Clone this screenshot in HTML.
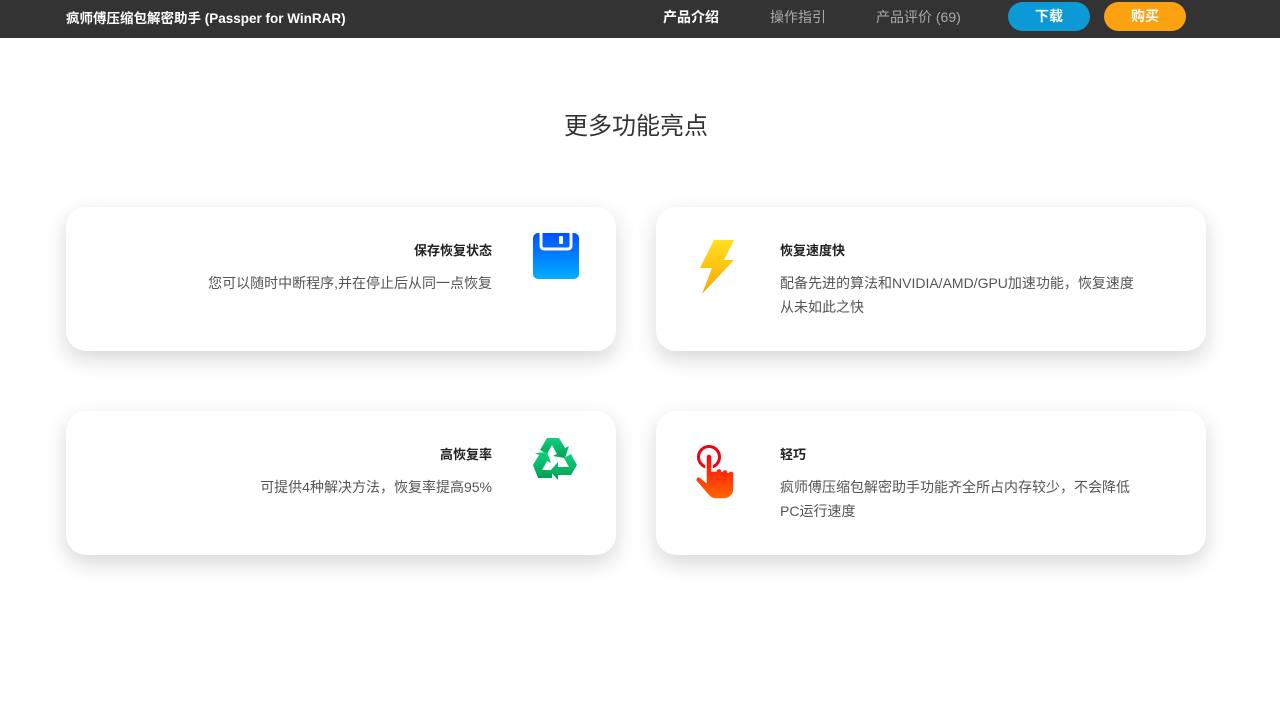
<!DOCTYPE html>
<html><head><meta charset="utf-8"><style>
*{margin:0;padding:0;box-sizing:border-box}
body{width:1280px;height:720px;background:#fff;font-family:"Liberation Sans","Noto Sans CJK SC",sans-serif;position:relative;overflow:hidden}
.nav{position:absolute;left:0;top:0;width:1280px;height:38px;background:#333}
.nav .t{position:absolute;left:66px;top:7px;color:#fff;font-size:13.5px;font-weight:bold}
.nav a{position:absolute;top:7px;font-size:14px;color:#aaa}
.btn{position:absolute;top:2px;width:82px;height:29px;border-radius:15px;color:#fff;font-size:14px;text-align:center;line-height:29px;font-weight:bold}
h2{position:absolute;top:106px;left:0;width:1272px;text-align:center;font-size:24px;font-weight:normal;color:#333}
.card{position:absolute;width:550px;height:144px;border-radius:20px;background:#fff;box-shadow:0 8px 22px rgba(0,0,0,.16)}
.card h4{position:absolute;font-size:13px;font-weight:bold;color:#222;top:33px}
.card p{position:absolute;font-size:14px;color:#555;line-height:24px;top:64px}
.r h4,.r p{right:124px;text-align:right}
.l h4,.l p{left:124px;width:364px}
.card svg{position:absolute}
</style></head><body>
<div class="nav">
<div class="t">疯师傅压缩包解密助手 (Passper for WinRAR)</div>
<a style="left:663px;color:#fff;font-weight:bold">产品介绍</a>
<a style="left:770px">操作指引</a>
<a style="left:876px">产品评价 (69)</a>
<div class="btn" style="left:1008px;background:#0c9ad6">下载</div>
<div class="btn" style="left:1104px;background:#fca10f">购买</div>
</div>
<h2>更多功能亮点</h2>

<div class="card r" style="left:66px;top:207px">
<svg style="left:466px;top:26px" width="48" height="48" viewBox="0 0 48 48"><defs><linearGradient id="b" x1="0" y1="0" x2="0" y2="1"><stop offset="0" stop-color="#0050ff"/><stop offset="1" stop-color="#00b0ff"/></linearGradient></defs><rect x="1" y="0" width="46" height="46" rx="5" fill="url(#b)"/><path d="M9 0v13a3 3 0 0 0 3 3h24a3 3 0 0 0 3-3V0" fill="none" stroke="#fff" stroke-width="3"/><rect x="27" y="3" width="4" height="8" rx="1" fill="#fff"/></svg>
<h4>保存恢复状态</h4><p>您可以随时中断程序,并在停止后从同一点恢复</p></div>

<div class="card l" style="left:656px;top:207px">
<svg style="left:44px;top:33px" width="36" height="54" viewBox="0 0 36 54"><defs><linearGradient id="y" x1="0" y1="0" x2="0" y2="1"><stop offset="0" stop-color="#ffe020"/><stop offset="1" stop-color="#f8a800"/></linearGradient></defs><path d="M14 0H34L24 20H34L2 54L12 28H0Z" fill="url(#y)"/></svg>
<h4>恢复速度快</h4><p>配备先进的算法和NVIDIA/AMD/GPU加速功能，恢复速度<br>从未如此之快</p></div>

<div class="card r" style="left:66px;top:411px">
<svg style="left:464px;top:24px" width="50" height="50" viewBox="0 0 50 50"><defs><linearGradient id="g" x1="0" y1="0" x2="0" y2="1"><stop offset="0" stop-color="#10d080"/><stop offset="1" stop-color="#00a050"/></linearGradient></defs><g fill="url(#g)"><path d="M17 3h12l6 10 4-2-4 12-12-2 4-2-5-9-5 9-7-4z"/><path d="M3 30l6-10-4-2 12-1 4 11-4-2-5 9h10v8H8z"/><path d="M47 30l-6 10H28v5l-8-9 8-9v5h11l-5-9 7-4z"/></g></svg>
<h4>高恢复率</h4><p>可提供4种解决方法，恢复率提高95%</p></div>

<div class="card l" style="left:656px;top:411px">
<svg style="left:38px;top:32px" width="46" height="58" viewBox="0 0 46 58"><defs><linearGradient id="o" x1="0" y1="0" x2="0" y2="1"><stop offset="0" stop-color="#ff0010"/><stop offset="1" stop-color="#ff6a00"/></linearGradient></defs><circle cx="15" cy="14" r="10.5" fill="none" stroke="#f00010" stroke-width="3"/><path d="M12 14a3 3 0 0 1 6 0v14h4a3 3 0 0 1 6 1 3 3 0 0 1 6 1 3 3 0 0 1 6 2v14a10 10 0 0 1-10 10h-8a10 10 0 0 1-8-4L2 38a3 3 0 0 1 4-4l6 5z" fill="url(#o)" stroke="#fff" stroke-width="1.5"/></svg>
<h4>轻巧</h4><p>疯师傅压缩包解密助手功能齐全所占内存较少，不会降低<br>PC运行速度</p></div>
</body></html>
